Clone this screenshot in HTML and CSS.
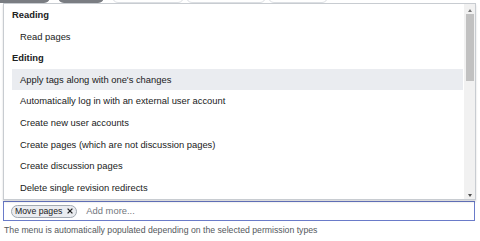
FILE: index.html
```html
<!DOCTYPE html>
<html lang="en">
  <head>
    <meta charset="UTF-8" />
    <meta name="viewport" content="width=device-width, initial-scale=1.0" />
    <title>Permissions</title>
    <link rel="stylesheet" href="styles.css">
  </head>

  <body>
    <div class="chip-peek">
      <span class="peek dark first"></span>
      <span class="peek dark second"></span>
      <span class="peek light third"></span>
      <span class="peek light fourth"></span>
      <span class="peek light fifth"></span>
    </div>

    <div class="menu">
      <div class="menu-list">
        <div class="group-label">Reading</div>
        <div class="option">Read pages</div>
        <div class="group-label">Editing</div>
        <div class="option is-highlighted">Apply tags along with one's changes</div>
        <div class="option">Automatically log in with an external user account</div>
        <div class="option">Create new user accounts</div>
        <div class="option">Create pages (which are not discussion pages)</div>
        <div class="option">Create discussion pages</div>
        <div class="option">Delete single revision redirects</div>
        <div class="option">Edit pages</div>
        <div class="option">Edit your own user CSS files</div>
      </div>
      <div class="scrollbar">
        <span class="arrow up"></span>
        <span class="thumb"></span>
        <span class="arrow down"></span>
      </div>
    </div>

    <div class="tag-input">
      <span class="tag"><span class="tag-label">Move pages</span><svg class="tag-remove" width="6" height="6" viewBox="0 0 6 6"><path d="M0.6 0.6 L5.4 5.4 M5.4 0.6 L0.6 5.4" stroke="#202122" stroke-width="1.3" /></svg></span>
      <span class="placeholder">Add more...</span>
    </div>

    <p class="help">The menu is automatically populated depending on the selected permission types</p>
  </body>
</html>
```

FILE: styles.css
```css
body {
  margin: 0;
  width: 480px;
  font-family: "Liberation Sans", Arial, sans-serif;
  color: #202122;
  background: #fff;
}

.chip-peek {
  display: flex;
  align-items: flex-end;
  height: 3px;
  overflow: hidden;
}

.peek {
  display: block;
  height: 12px;
  border-radius: 6px;
  box-sizing: border-box;
}

.peek.dark {
  background: #7a7d82;
}

.peek.light {
  background: #fff;
  border: 1px solid #dcdfe3;
}

.first {
  width: 56px;
  margin-left: -6px;
}

.second {
  width: 46px;
  margin-left: 8px;
}

.third {
  width: 72px;
  margin-left: 8px;
}

.fourth {
  width: 80px;
  margin-left: 2px;
}

.fifth {
  width: 60px;
  margin-left: 2px;
}

.menu {
  display: flex;
  height: 197px;
  margin: 0 4px 0 3px;
  box-sizing: border-box;
  border: 1px solid #c8ccd1;
  background: #fff;
  box-shadow: 0 2px 2px rgba(0, 0, 0, 0.15);
  position: relative;
}

.menu-list {
  flex: 1;
  overflow: hidden;
  font-size: 9.4px;
}

.group-label {
  height: 21.6px;
  line-height: 21.6px;
  padding-left: 8px;
  font-weight: bold;
}

.option {
  height: 21.6px;
  line-height: 21.6px;
  margin: 0 1px 0 8px;
  padding-left: 8px;
  white-space: nowrap;
}

.option.is-highlighted {
  background: #eaecf0;
}

.scrollbar {
  display: flex;
  flex-direction: column;
  align-items: center;
  width: 11px;
  padding: 5px 0 2px;
  box-sizing: border-box;
  background: #f1f1f1;
}

.arrow {
  width: 0;
  height: 0;
  border-left: 2.5px solid transparent;
  border-right: 2.5px solid transparent;
}

.arrow.up {
  border-bottom: 3px solid #7a7a7a;
}

.arrow.down {
  margin-top: auto;
  border-top: 3px solid #505050;
}

.thumb {
  width: 8px;
  height: 67px;
  margin-top: 2px;
  background: #c1c1c1;
}

.tag-input {
  display: flex;
  align-items: center;
  gap: 9px;
  height: 20px;
  margin: 1px 5px 0 3px;
  padding-left: 7px;
  box-sizing: border-box;
  border: 1px solid #6a7bc9;
  background: #fff;
}

.tag {
  display: flex;
  align-items: center;
  gap: 5px;
  height: 13px;
  padding: 0 3px;
  box-sizing: border-box;
  border: 1px solid #a2a9b1;
  border-radius: 7px;
  background: #eaecf0;
  font-size: 8.7px;
  line-height: 10px;
}

.placeholder {
  font-size: 9.4px;
  line-height: 12px;
  color: #72777d;
}

.help {
  margin: 3px 0 0 4px;
  font-size: 8.7px;
  line-height: 13px;
  color: #54595d;
}
```
